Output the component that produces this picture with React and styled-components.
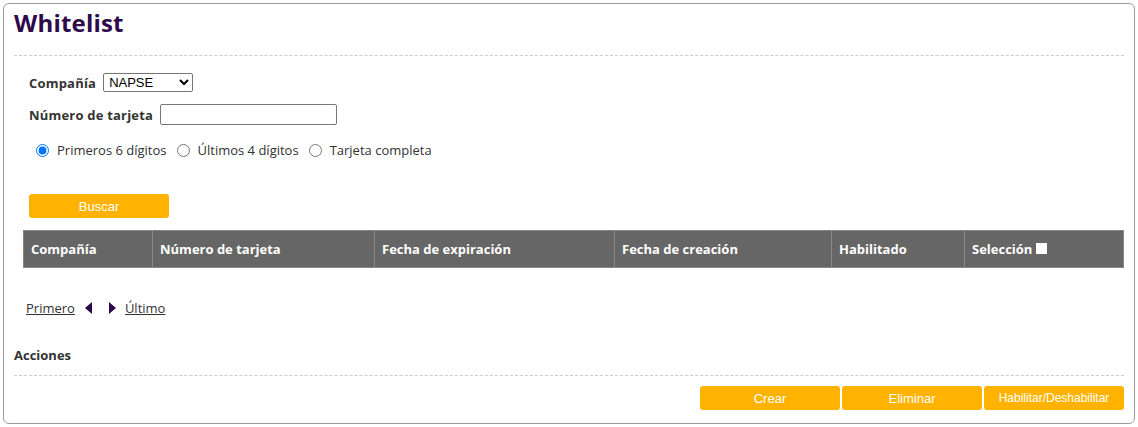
import React from "react";
import styled, { createGlobalStyle } from "styled-components";

const GlobalStyle = createGlobalStyle`
  body {
    margin: 0;
    background: #ffffff;
    font-family: "Open Sans", "Noto Sans", sans-serif;
    color: #333333;
  }
`;

const Panel = styled.div`
  margin: 3px 0 0 3px;
  width: 1132px;
  height: 421px;
  box-sizing: border-box;
  border: 1px solid #9a9a9a;
  border-radius: 6px;
  padding: 3px 10px 0 10px;
`;

const Title = styled.h1`
  margin: 0;
  font-size: 24px;
  line-height: 32px;
  font-weight: 700;
  letter-spacing: 0.2px;
  color: #2c0a4b;
`;

const Divider = styled.div`
  border-top: 1px dashed #cccccc;
  margin-top: ${p => p.$top}px;
`;

const Form = styled.div`
  padding-left: 15px;
  margin-top: 17px;
`;

const Row = styled.div`
  display: flex;
  align-items: center;
  gap: 7px;
  height: ${p => p.$h}px;
  margin-top: ${p => p.$top || 0}px;
`;

const Label = styled.label`
  font-size: 13px;
  font-weight: 700;
  letter-spacing: 0.2px;
  color: #333333;
`;

const Select = styled.select`
  width: 90px;
  height: 19px;
  box-sizing: border-box;
  font-family: "Liberation Sans", Arial, sans-serif;
  font-size: 13px;
  color: #000;
  border: 1px solid #767676;
  border-radius: 2px;
  padding: 0 0 0 1px;
  background: #fff;
`;

const TextInput = styled.input`
  width: 177px;
  height: 21px;
  box-sizing: border-box;
  border: 1px solid #767676;
  border-radius: 2px;
  font-family: "Liberation Sans", Arial, sans-serif;
  font-size: 13px;
`;

const RadioGroup = styled.div`
  display: flex;
  align-items: center;
  height: 18px;
  margin-top: 16px;
  padding-left: 7px;
  gap: 10px;
`;

const RadioItem = styled.label`
  display: flex;
  align-items: center;
  gap: 8px;
  font-size: 13px;
  color: #333333;
`;

const Radio = styled.input.attrs({ type: "radio", name: "modo" })`
  margin: 0;
  width: 13px;
  height: 13px;
`;

const Button = styled.button`
  width: 140px;
  height: 24px;
  border: none;
  border-radius: 3px;
  background: #ffb300;
  color: #ffffff;
  font-family: "Liberation Sans", Arial, sans-serif;
  font-size: ${p => (p.$big ? 13 : 12)}px;
  padding: 0;
`;

const SearchButton = styled(Button)`
  display: block;
  margin-top: 35px;
`;

const Table = styled.table`
  margin: 12px 0 0 9px;
  width: 1100px;
  border-collapse: collapse;
  table-layout: fixed;
  background: #666666;
`;

const Th = styled.th`
  height: 37px;
  padding: 0 0 0 7px;
  border: 1px solid #878787;
  color: #ffffff;
  font-size: 13px;
  font-weight: 700;
  text-align: left;
  vertical-align: middle;
  width: ${p => p.$w}px;
  box-sizing: border-box;
`;

const CheckBox = styled.span`
  display: inline-block;
  width: 11px;
  height: 11px;
  background: #ffffff;
  margin-left: 4px;
  vertical-align: 0;
`;

const Pager = styled.div`
  display: flex;
  align-items: center;
  height: 18px;
  margin: 31px 0 0 12px;
  font-size: 13px;
`;

const PageLink = styled.a`
  color: #333333;
  text-decoration: underline;
  cursor: pointer;
`;

const Arrow = styled.span`
  display: inline-block;
  width: 0;
  height: 0;
  border-top: 6px solid transparent;
  border-bottom: 6px solid transparent;
  ${p =>
    p.$dir === "left"
      ? "border-right: 7px solid #2c0a4b; margin: 0 17px 0 10px;"
      : "border-left: 7px solid #2c0a4b; margin: 0 9px 0 0;"}
`;

const Section = styled.div`
  margin-top: 29px;
  height: 18px;
  line-height: 18px;
  font-size: 13px;
  font-weight: 700;
  color: #333333;
`;

const Actions = styled.div`
  display: flex;
  justify-content: flex-end;
  gap: 2px;
  margin-top: 10px;
`;

const columns = [
  { label: "Compañía", w: 129 },
  { label: "Número de tarjeta", w: 222 },
  { label: "Fecha de expiración", w: 240 },
  { label: "Fecha de creación", w: 217 },
  { label: "Habilitado", w: 133 },
  { label: "Selección", w: 159, check: true },
];

export default function App() {
  return (
    <>
      <GlobalStyle />
      <Panel>
        <Title>Whitelist</Title>
        <Divider $top={16} />
        <Form>
          <Row $h={19}>
            <Label>Compañía</Label>
            <Select defaultValue="NAPSE">
              <option>NAPSE</option>
            </Select>
          </Row>
          <Row $h={21} $top={12}>
            <Label>Número de tarjeta</Label>
            <TextInput type="text" />
          </Row>
          <RadioGroup>
            <RadioItem>
              <Radio defaultChecked />
              Primeros 6 dígitos
            </RadioItem>
            <RadioItem>
              <Radio />
              Últimos 4 dígitos
            </RadioItem>
            <RadioItem>
              <Radio />
              Tarjeta completa
            </RadioItem>
          </RadioGroup>
          <SearchButton $big>Buscar</SearchButton>
        </Form>
        <Table>
          <thead>
            <tr>
              {columns.map(c => (
                <Th key={c.label} $w={c.w}>
                  {c.label}
                  {c.check && <CheckBox />}
                </Th>
              ))}
            </tr>
          </thead>
        </Table>
        <Pager>
          <PageLink>Primero</PageLink>
          <Arrow $dir="left" />
          <Arrow $dir="right" />
          <PageLink>Último</PageLink>
        </Pager>
        <Section>Acciones</Section>
        <Divider $top={11} />
        <Actions>
          <Button $big>Crear</Button>
          <Button $big>Eliminar</Button>
          <Button>Habilitar/Deshabilitar</Button>
        </Actions>
      </Panel>
    </>
  );
}
